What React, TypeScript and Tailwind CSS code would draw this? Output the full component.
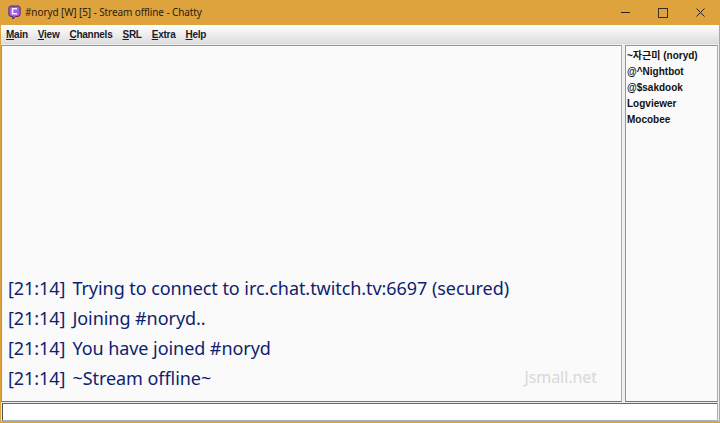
const lines = [
  "Trying to connect to irc.chat.twitch.tv:6697 (secured)",
  "Joining #noryd..",
  "You have joined #noryd",
  "~Stream offline~",
];

const users = ["~자근미 (noryd)", "@^Nightbot", "@$sakdook", "Logviewer", "Mocobee"];

const menus = [
  ["M", "ain"],
  ["V", "iew"],
  ["C", "hannels"],
  ["S", "RL"],
  ["E", "xtra"],
  ["H", "elp"],
];

function ChattyIcon() {
  return (
    <svg width="13" height="15" viewBox="0 0 15 17" className="shrink-0">
      <path d="M3.5 1h8A2.5 2.5 0 0 1 14 3.5v7a2.5 2.5 0 0 1-2.5 2.5H9l-3.5 3v-3h-2A2.5 2.5 0 0 1 1 10.5v-7A2.5 2.5 0 0 1 3.5 1z" fill="#a35ee8" stroke="#35204f" />
      <path d="M10.5 4.2H5.2v5.8h5.3" fill="none" stroke="#f4ecff" strokeWidth="1.8" />
    </svg>
  );
}

export default function App() {
  return (
    <div className="flex h-[423px] w-[720px] flex-col overflow-hidden bg-[#dfa33e] px-[1px] pb-[2px] font-['Liberation_Sans',sans-serif]">
      <div className="flex h-[25px] shrink-0 items-center pl-[7px]">
        <ChattyIcon />
        <span className="ml-[4px] whitespace-nowrap font-['Noto_Sans',sans-serif] text-[10px] tracking-[-0.1px] text-[#2b2010]">#noryd [W] [5] - Stream offline - Chatty</span>
        <div className="ml-auto flex items-center pr-[14px]">
          <div className="h-[1px] w-[9px] bg-[#222]" />
          <div className="ml-[28px] h-[10px] w-[10px] border border-[#3a3020]" />
          <svg width="9" height="9" viewBox="0 0 9 9" className="ml-[28px]">
            <path d="M0.5 0.5l8 8M8.5 0.5l-8 8" stroke="#222" strokeWidth="1" fill="none" />
          </svg>
        </div>
      </div>
      <div className="flex h-[19px] shrink-0 items-center gap-[10px] bg-gradient-to-b from-[#ffffff] to-[#dcdcdc] pl-[5px] text-[10px] font-bold tracking-[-0.25px] text-[#1a1a2a]">
        {menus.map(([a, b]) => (
          <span key={a}>
            <span className="underline">{a}</span>
            {b}
          </span>
        ))}
      </div>
      <div className="flex min-h-0 flex-1 gap-[3px] bg-[#eeeeee] pb-[1px] pr-[1px] pt-[1px]">
        <div className="flex min-w-0 flex-1 flex-col justify-end border border-[#8a98a8] border-b-[#6a7680] border-r-[#a4b0bc] bg-[#fafafa] pb-[10px] pl-[6px] font-['Noto_Sans',sans-serif] text-[18px] tracking-[-0.06px] text-[#0f1f6e]">
          <div className="relative flex flex-col gap-[5px]">
            {lines.map((l) => (
              <div key={l} className="flex h-[25px] items-center whitespace-nowrap">
                <span className="mr-[7px]">[21:14]</span>
                {l}
              </div>
            ))}
            <span className="absolute right-[24px] bottom-[2px] text-[16px] text-[#d8d8d8]">Jsmall.net</span>
          </div>
        </div>
        <div className="w-[93px] shrink-0 border border-[#8a98a8] border-b-[#6a7680] border-r-[#a4b0bc] bg-[#fafafa] pl-[1px] pt-[1px] text-[10px] font-bold text-[#111]">
          {users.map((u) => (
            <div key={u} className="flex h-[16px] items-center whitespace-nowrap font-['Liberation_Sans','Noto_Sans_CJK_KR',sans-serif]">{u}</div>
          ))}
        </div>
      </div>
      <div className="shrink-0 bg-[#eeeeee] pr-[1px] pl-[1px]">
        <div className="h-[18px] border border-[#a4b0bc] border-l-[#4a525a] border-t-[#5f6a74] bg-white" />
      </div>
    </div>
  );
}
